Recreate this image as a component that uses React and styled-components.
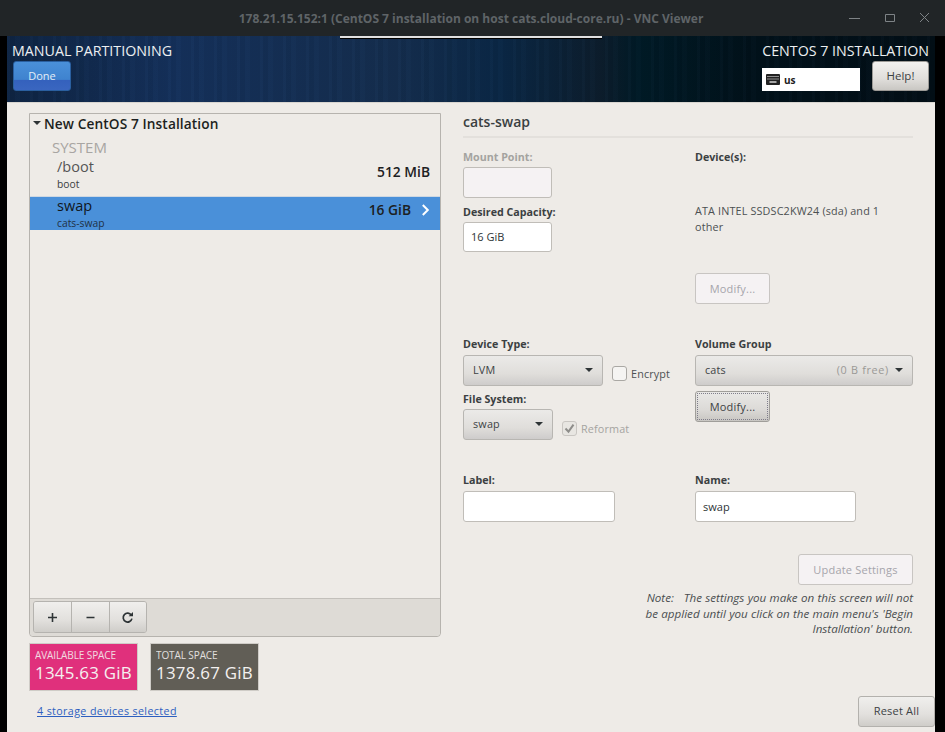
import React from "react";
import styled, { createGlobalStyle, css } from "styled-components";

const Global = createGlobalStyle`
  html, body { margin: 0; padding: 0; background: #000; overflow: hidden; }
  * { box-sizing: border-box; }
  body { font-family: "Open Sans", "Noto Sans", "Liberation Sans", sans-serif; color: #2e3436; }
`;

const Page = styled.div`
  width: 945px; height: 732px; display: flex; flex-direction: column; position: relative; overflow: hidden;
`;
const TitleBar = styled.div`
  height: 36px; flex: none; background: #212527; display: flex; align-items: center; justify-content: center; position: relative;
`;
const TitleText = styled.div`
  font-size: 12px; font-weight: 700; color: #5f6467; margin-left: -3px;
`;
const WinControls = styled.div`
  position: absolute; right: 15px; top: 12px; display: flex; gap: 24px; align-items: center;
`;
const Handle = styled.div`
  position: absolute; left: 340px; top: 36px; width: 262px; height: 3px; background: #e0e0e0; border-bottom: 1px solid #000; z-index: 2;
`;
const Frame = styled.div`
  flex: 1; padding: 0 10px 0 7px; background: #000; display: flex; min-height: 0;
`;
const Screen = styled.div`
  flex: 1; display: flex; flex-direction: column; background: #eeebe7; position: relative;
`;
const Banner = styled.header`
  height: 67px; flex: none; display: flex; justify-content: space-between; padding: 7px 6px 0 5px;
  border-bottom: 1px solid #d8d5d0;
  background:
    repeating-linear-gradient(90deg, rgba(120,160,210,0.025) 0 3px, rgba(0,0,0,0.035) 3px 8px, rgba(120,160,210,0.015) 8px 13px, rgba(0,0,0,0.02) 13px 23px),
    linear-gradient(90deg, #0e2442 0%, #14305a 18%, #142d4d 42%, #0a2745 53%, #0c1d2c 64%, #001a26 68%, #01111a 80%, #020e16 100%);
`;
const BannerCol = styled.div`
  display: flex; flex-direction: column; align-items: ${p => (p.$end ? "flex-end" : "flex-start")};
`;
const BannerTitle = styled.div`
  font-size: 14.25px; line-height: 16px; height: 18px; color: #eceff1; white-space: nowrap;
`;
const DoneButton = styled.div`
  width: 58px; height: 30px; margin-left: 1px; border-radius: 3px; border: 1px solid #2a5f9f;
  background: linear-gradient(180deg, #4a90d9 0%, #3f83cf 62%, #3461bd 66%, #3a66c0 100%);
  color: #e4edf7; font-size: 11px; display: flex; align-items: center; justify-content: center; padding-bottom: 1px;
`;
const BannerControls = styled.div`
  display: flex; gap: 12px; align-items: flex-start;
`;
const KeyboardBox = styled.div`
  width: 98px; height: 23px; margin-top: 7px; background: #fff; display: flex; align-items: center; gap: 4px; padding-left: 4px;
  font-size: 10px; font-weight: 700; color: #222;
`;
const HelpButton = styled.div`
  width: 57px; height: 30px; border-radius: 3px; border: 1px solid #9c9a96;
  background: linear-gradient(180deg, #f2f1ef 0%, #e0dedb 60%, #c9c7c3 100%);
  font-size: 11.5px; color: #3c4143; display: flex; align-items: center; justify-content: center; padding-bottom: 2px;
`;
const Body = styled.div`
  flex: 1; min-height: 0; display: flex; padding: 10px 22px 0 22px; gap: 22px;
`;
const LeftCol = styled.div`
  width: 412px; flex: none; display: flex; flex-direction: column;
`;
const Panel = styled.div`
  height: 524px; flex: none; border: 1px solid #b6b3ae; border-radius: 0 0 4px 4px; display: flex; flex-direction: column;
`;
const PanelHead = styled.div`
  height: 20px; display: flex; align-items: center; gap: 3px; padding: 0 0 2px 3px; margin-bottom: 4px;
  font-size: 13.7px; font-weight: 600; color: #1c1f20; letter-spacing: .1px;
`;
const Caret = styled.span`
  width: 0; height: 0; border-left: 4.5px solid transparent; border-right: 4.5px solid transparent; border-top: 4.5px solid ${p => p.$c || "#2e3436"};
  display: inline-block; flex: none;
`;
const SystemLabel = styled.div`
  font-size: 15px; line-height: 18px; margin-bottom: 3px; color: #a8a5a2; padding-left: 22px;
`;
const Mount = styled.div`
  display: flex; justify-content: space-between; align-items: center; height: ${p => p.$h}px; padding: 0 10px 0 27px;
  ${p => p.$active && css`background: #4a90d9;`}
  ${p => !p.$active && css`border-bottom: 1px solid #cfd8e2;`}
`;
const MountInfo = styled.div`
  display: flex; flex-direction: column; margin-top: ${p => p.$mt || 0}px;
`;
const MountName = styled.div`
  font-size: 14.5px; line-height: 16px; color: ${p => (p.$active ? "#10161c" : "#555")}; font-weight: ${p => (p.$active ? 500 : 400)};
`;
const MountSub = styled.div`
  font-size: 10.3px; line-height: 16px; color: ${p => (p.$active ? "#1f3145" : "#3a3d3e")}; margin-top: 1px;
`;
const MountSize = styled.div`
  display: flex; align-items: center; gap: 10px; font-size: 13.8px; font-weight: 600; color: #1c2022; margin-bottom: ${p => p.$mb}px;
`;
const ListSpace = styled.div`flex: 1;`;
const PanelFoot = styled.div`
  height: 38px; flex: none; background: #dedbd6; border-top: 1px solid #c3c0bb; padding: 2px 3px; border-radius: 0 0 4px 4px;
`;
const ToolGroup = styled.div`
  display: inline-flex; height: 32px; border: 1px solid #b5b3af; border-radius: 3px; overflow: hidden;
`;
const ToolButton = styled.div`
  width: 37.3px; display: flex; align-items: center; justify-content: center;
  background: linear-gradient(180deg, #f0efed 0%, #e2e0dd 60%, #cfcdc9 100%);
  & + & { border-left: 1px solid #b5b3af; }
`;
const Stats = styled.div`
  display: flex; gap: 12px; margin-top: 6px;
`;
const Stat = styled.div`
  width: 109px; height: 48px; border: 1px solid #cfccc7; background: ${p => p.$bg}; color: #f4f1f0; padding: 5px 0 0 5px;
`;
const StatLabel = styled.div`
  font-size: 10px; line-height: 13px; opacity: .88; letter-spacing: -.1px; white-space: nowrap;
`;
const StatValue = styled.div`
  font-size: 16.9px; line-height: 22px; letter-spacing: .25px; white-space: nowrap; font-weight: 500;
`;
const DevicesLink = styled.a`
  margin: 13px 0 0 8px; font-size: 10.7px; line-height: 15px; color: #2d5fc0; text-decoration: underline; letter-spacing: .38px; white-space: nowrap;
`;
const RightCol = styled.div`
  width: 450px; flex: none; display: flex; flex-direction: column; position: relative;
`;
const Heading = styled.div`
  height: 25px; line-height: 18px; font-size: 14px; font-weight: 600; color: #3a3f41; border-bottom: 2px solid #e3e0dc;
`;
const FormGrid = styled.div`
  display: grid; grid-template-columns: 232px 218px; margin-top: 12px;
`;
const Column = styled.div`
  display: flex; flex-direction: column; align-items: flex-start;
`;
const Label = styled.div`
  font-size: 10.7px; line-height: 14px; height: 14px; font-weight: 700; color: ${p => (p.$off ? "#a4a3a0" : "#3b4042")}; margin-top: ${p => p.$mt || 0}px; white-space: nowrap;
`;
const Input = styled.div`
  width: ${p => p.$w}px; height: ${p => p.$h || 31}px; margin-top: ${p => p.$mt || 3}px; background: ${p => (p.$off ? "#f5f2f3" : "#fff")};
  border: 1px solid #c0bdb8; border-radius: 3px; font-size: 11px; color: #2e3436; display: flex; align-items: center; padding: 0 0 1px 7px;
`;
const DeviceText = styled.div`
  width: 210px; margin-top: 39px; font-size: 10.8px; line-height: 16px; color: #4c5052; letter-spacing: .15px;
`;
const Button = styled.div`
  width: ${p => p.$w}px; height: ${p => p.$h || 31}px; margin-top: ${p => p.$mt || 0}px; padding-bottom: ${p => p.$pb || 0}px; display: flex; align-items: center; justify-content: center;
  border: 1px solid #b3b1ad; border-radius: 3px; font-size: 11px; letter-spacing: .2px; color: #3d4244;
  background: linear-gradient(180deg, #f0efed 0%, #e2e0dd 60%, #cfcdc9 100%);
  ${p => p.$off && css`background: #f5f2f3; color: #a6a5ab; border-color: #c8c5c2;`}
  ${p => p.$focus && css`
    outline: 1px dotted #7f7d8a; outline-offset: -3px; border-color: #a09e9a;
    background: linear-gradient(180deg, #e9e8e6 0%, #dcdad7 60%, #c8c6c2 100%);
  `}
`;
const Select = styled.div`
  width: ${p => p.$w}px; height: 31px; margin-top: ${p => p.$mt || 4}px; display: flex; align-items: center; justify-content: space-between;
  padding: 0 9px 2px ${p => p.$pl || 9}px; border: 1px solid #b8b6b2; border-radius: 3px; font-size: 10.8px; color: #3d4244;
  background: linear-gradient(180deg, #ebeae8 0%, #e0dedb 60%, #cecccb 100%);
  letter-spacing: .2px;
`;
const SelectEnd = styled.span`
  display: flex; align-items: center; gap: 6px; color: #9a9996; letter-spacing: .7px;
`;
const InlineRow = styled.div`
  display: flex; align-items: flex-start; gap: 9px;
`;
const CheckWrap = styled.div`
  display: flex; align-items: center; gap: 4px; margin-top: ${p => p.$mt}px; font-size: 10.8px; color: ${p => (p.$off ? "#a5a4a1" : "#4d5153")}; letter-spacing: .15px;
`;
const Box = styled.span`
  width: 15px; height: 15px; border: 1px solid ${p => (p.$off ? "#c9c6c2" : "#aaa8a4")}; border-radius: 3px; background: ${p => (p.$off ? "#e8e6e2" : "#f5f4f2")};
  display: flex; align-items: center; justify-content: center; flex: none;
`;
const NoteArea = styled.div`
  display: flex; flex-direction: column; align-items: flex-end; margin-top: 32px;
`;
const Note = styled.div`
  width: 276px; margin-top: 5px; text-align: right; font-size: 11.6px; line-height: 15.6px; font-style: italic; color: #4a4e50; word-spacing: .3px;
`;
const ResetButton = styled(Button)`
  position: absolute; right: -22px; bottom: 5px;
`;

const Plus = () => (
  <svg width="11" height="11" viewBox="0 0 11 11"><path d="M5.5 1v9M1 5.5h9" stroke="#2e3436" strokeWidth="1.6" /></svg>
);
const Minus = () => (
  <svg width="11" height="11" viewBox="0 0 11 11"><path d="M1.5 5.5h8" stroke="#2e3436" strokeWidth="1.6" /></svg>
);
const Refresh = () => (
  <svg width="13" height="13" viewBox="0 0 13 13" fill="none">
    <path d="M10.3 4.2A4.4 4.4 0 1 0 10.9 7.6" stroke="#2e3436" strokeWidth="1.7" />
    <path d="M7.6 5.2h4.4V1z" fill="#2e3436" />
  </svg>
);
const Chevron = () => (
  <svg width="9" height="12" viewBox="0 0 9 12" fill="none"><path d="M1.8 1l5 5-5 5" stroke="#fff" strokeWidth="2" /></svg>
);
const Keyboard = () => (
  <svg width="14" height="11" viewBox="0 0 14 11">
    <rect width="14" height="11" rx="1" fill="#222" />
    <path d="M1.5 2.5h11M1.5 5h11" stroke="#fff" strokeWidth="1" strokeDasharray="1 1" />
    <path d="M3.5 8h7" stroke="#fff" strokeWidth="1.2" />
  </svg>
);
const Check = () => (
  <svg width="11" height="11" viewBox="0 0 11 11" fill="none"><path d="M1.5 5.5l3 3.2 5-7" stroke="#8e8d8a" strokeWidth="2" /></svg>
);
const WinIcon = ({ d }) => (
  <svg width="11" height="11" viewBox="0 0 11 11" fill="none"><path d={d} stroke="#7e8386" strokeWidth="1" /></svg>
);

export default function App() {
  return (
    <Page>
      <Global />
      <TitleBar>
        <TitleText>178.21.15.152:1 (CentOS 7 installation on host cats.cloud-core.ru) - VNC Viewer</TitleText>
        <WinControls>
          <WinIcon d="M0 6.5h11" />
          <WinIcon d="M1.5 2.5h9v7h-9z" />
          <WinIcon d="M1 1l9 9M10 1l-9 9" />
        </WinControls>
      </TitleBar>
      <Handle />
      <Frame>
        <Screen>
          <Banner>
            <BannerCol>
              <BannerTitle>MANUAL PARTITIONING</BannerTitle>
              <DoneButton>Done</DoneButton>
            </BannerCol>
            <BannerCol $end>
              <BannerTitle>CENTOS 7 INSTALLATION</BannerTitle>
              <BannerControls>
                <KeyboardBox><Keyboard />us</KeyboardBox>
                <HelpButton>Help!</HelpButton>
              </BannerControls>
            </BannerCol>
          </Banner>
          <Body>
            <LeftCol>
              <Panel>
                <PanelHead><Caret />New CentOS 7 Installation</PanelHead>
                <SystemLabel>SYSTEM</SystemLabel>
                <Mount $h={38}>
                  <MountInfo $mt={-4}>
                    <MountName>/boot</MountName>
                    <MountSub>boot</MountSub>
                  </MountInfo>
                  <MountSize $mb={12}>512 MiB</MountSize>
                </Mount>
                <Mount $h={33} $active>
                  <MountInfo $mt={2}>
                    <MountName $active>swap</MountName>
                    <MountSub $active>cats-swap</MountSub>
                  </MountInfo>
                  <MountSize $mb={8}>16 GiB<Chevron /></MountSize>
                </Mount>
                <ListSpace />
                <PanelFoot>
                  <ToolGroup>
                    <ToolButton><Plus /></ToolButton>
                    <ToolButton><Minus /></ToolButton>
                    <ToolButton><Refresh /></ToolButton>
                  </ToolGroup>
                </PanelFoot>
              </Panel>
              <Stats>
                <Stat $bg="#e0307c">
                  <StatLabel>AVAILABLE SPACE</StatLabel>
                  <StatValue>1345.63 GiB</StatValue>
                </Stat>
                <Stat $bg="#615e56">
                  <StatLabel>TOTAL SPACE</StatLabel>
                  <StatValue>1378.67 GiB</StatValue>
                </Stat>
              </Stats>
              <DevicesLink>4 storage devices selected</DevicesLink>
            </LeftCol>
            <RightCol>
              <Heading>cats-swap</Heading>
              <FormGrid>
                <Column>
                  <Label $off>Mount Point:</Label>
                  <Input $w={89} $off />
                  <Label $mt={7}>Desired Capacity:</Label>
                  <Input $w={89} $h={30}>16 GiB</Input>
                  <Label $mt={85}>Device Type:</Label>
                  <InlineRow>
                    <Select $w={140}>LVM<Caret /></Select>
                    <CheckWrap $mt={15}><Box />Encrypt</CheckWrap>
                  </InlineRow>
                  <Label $mt={6}>File System:</Label>
                  <InlineRow>
                    <Select $w={90} $mt={3}>swap<Caret /></Select>
                    <CheckWrap $mt={15} $off><Box $off><Check /></Box>Reformat</CheckWrap>
                  </InlineRow>
                  <Label $mt={33}>Label:</Label>
                  <Input $w={152} $mt={4} />
                </Column>
                <Column>
                  <Label>Device(s):</Label>
                  <DeviceText>ATA INTEL SSDSC2KW24 (sda) and 1 other</DeviceText>
                  <Button $w={75} $off $mt={38}>Modify...</Button>
                  <Label $mt={33}>Volume Group</Label>
                  <Select $w={218}>
                    cats
                    <SelectEnd>(0 B free)<Caret /></SelectEnd>
                  </Select>
                  <Button $w={75} $mt={5} $focus>Modify...</Button>
                  <Label $mt={51}>Name:</Label>
                  <Input $w={161} $mt={4}>swap</Input>
                </Column>
              </FormGrid>
              <NoteArea>
                <Button $w={115} $off $pb={1}>Update Settings</Button>
                <Note>Note:&nbsp;&nbsp; The settings you make on this screen will not be applied until you click on the main menu's 'Begin Installation' button.</Note>
              </NoteArea>
              <ResetButton $w={77} $pb={2}>Reset All</ResetButton>
            </RightCol>
          </Body>
        </Screen>
      </Frame>
    </Page>
  );
}
